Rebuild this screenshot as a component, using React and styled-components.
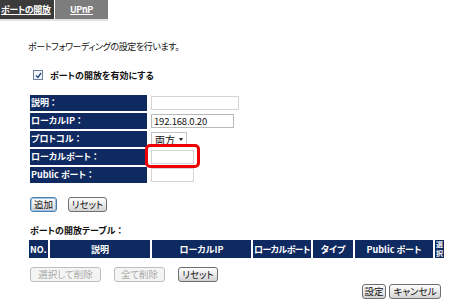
import React from 'react';
import styled, { createGlobalStyle } from 'styled-components';

const GlobalStyle = createGlobalStyle`
  body {
    margin: 0;
    background: #fff;
    font-family: "Noto Sans CJK JP", "Liberation Sans", sans-serif;
    font-feature-settings: "palt";
  }
`;

const Page = styled.div`
  width: 450px;
  height: 302px;
  overflow: hidden;
  position: relative;
  background: #fff;
  color: #111;
  font-size: 9px;
`;

const TabBar = styled.div`
  display: flex;
  gap: 1px;
  width: 108px;
  height: 19px;
  border-bottom: 2px solid #e2e2e2;
`;

const Tab = styled.div`
  width: ${(p) => p.$w}px;
  background: ${(p) => (p.$active ? '#3b3b3b' : '#7d7d7d')};
  color: #fff;
  font-weight: bold;
  font-size: 9px;
  letter-spacing: -0.4px;
  white-space: nowrap;
  text-decoration: underline;
  display: flex;
  align-items: center;
  justify-content: ${(p) => (p.$active ? 'flex-start' : 'center')};
  padding-left: ${(p) => (p.$active ? 1 : 0)}px;
  padding-bottom: 1px;
  box-sizing: border-box;
`;

const Content = styled.div`
  padding-left: 30px;
`;

const Intro = styled.div`
  margin-top: 20px;
  margin-left: -2px;
  height: 12px;
  line-height: 12px;
  letter-spacing: -0.4px;
`;

const CheckRow = styled.div`
  display: flex;
  align-items: center;
  gap: 7px;
  margin-top: 16px;
  margin-left: 3px;
  height: 12px;
  font-weight: bold;
`;

const CheckBox = styled.span`
  width: 8px;
  height: 8px;
  border: 1px solid #6b7f9c;
  background: #f4f6fa;
  display: flex;
  align-items: center;
  justify-content: center;
`;

const FormGrid = styled.div`
  display: grid;
  grid-template-columns: 117px auto;
  column-gap: 4px;
  row-gap: 2px;
  margin-top: 14px;
`;

const Label = styled.div`
  background: #0f2a60;
  color: #fff;
  font-weight: bold;
  height: 16px;
  line-height: 16px;
  padding-left: 1px;
  white-space: pre;
`;

const Field = styled.div`
  display: flex;
  align-items: center;
`;

const InputWrap = styled.div`
  position: relative;
  display: flex;
`;

const TextBox = styled.div`
  width: ${(p) => p.$w}px;
  height: 14px;
  box-sizing: border-box;
  border: 1px solid ${(p) => (p.$dark ? '#b9b9b9' : '#d4d4d4')};
  background: #fff;
  font-size: 9.5px;
  line-height: 12px;
  padding-left: 2px;
  letter-spacing: -0.2px;
`;

const Highlight = styled.div`
  position: absolute;
  left: -6px;
  top: -6px;
  width: 55px;
  height: 24px;
  box-sizing: border-box;
  border: 3px solid #ee0000;
  border-radius: 5px;
`;

const SelectBox = styled.div`
  width: 36px;
  height: 15px;
  box-sizing: border-box;
  border: 1px solid #c4c4c4;
  display: flex;
  align-items: center;
  justify-content: space-between;
  padding: 0 3px 0 3px;
  font-size: 10px;
`;

const Arrow = styled.span`
  width: 0;
  height: 0;
  border-left: 2.5px solid transparent;
  border-right: 2.5px solid transparent;
  border-top: 3px solid #222;
  margin-top: 1px;
`;

const ButtonRow = styled.div`
  display: flex;
  gap: ${(p) => p.$gap}px;
  margin-top: ${(p) => p.$top}px;
  justify-content: ${(p) => (p.$end ? 'flex-end' : 'flex-start')};
  padding-right: ${(p) => (p.$end ? 9 : 0)}px;
`;

const Button = styled.div`
  width: ${(p) => p.$w}px;
  height: 15px;
  box-sizing: border-box;
  border: 1px solid ${(p) => (p.$focus ? '#4a7fb0' : p.$disabled ? '#bdbdbd' : '#6e6e6e')};
  box-shadow: ${(p) => (p.$focus ? 'inset 0 0 0 1px #9cc4e6' : 'none')};
  border-radius: 3px;
  background: ${(p) =>
    p.$disabled ? '#f4f4f4' : 'linear-gradient(#fdfdfd, #e6e6e6 60%, #d2d2d2)'};
  color: ${(p) => (p.$disabled ? '#a9a9a9' : '#111')};
  display: flex;
  align-items: center;
  justify-content: center;
  font-size: 9.5px;
  line-height: 1;
  white-space: nowrap;
`;

const SectionTitle = styled.div`
  margin-top: 14px;
  font-weight: bold;
  height: 10px;
  line-height: 10px;
  white-space: pre;
`;

const HeaderRow = styled.div`
  display: grid;
  grid-template-columns: 19px 100px 99px 58px 40px 78px 9px;
  column-gap: 2px;
  margin-top: 4px;
  margin-left: -1px;
  height: 18px;
`;

const HeadCell = styled.div`
  background: #0f2a60;
  color: #fff;
  font-weight: bold;
  display: flex;
  align-items: center;
  justify-content: ${(p) => (p.$left ? 'flex-start' : 'center')};
  padding-left: ${(p) => (p.$left ? 1 : 0)}px;
  letter-spacing: ${(p) => (p.$tight ? '-0.6px' : '0')};
  white-space: nowrap;
  overflow: hidden;
`;

const NarrowCell = styled(HeadCell)`
  flex-direction: column;
  justify-content: center;
  font-size: 7px;
  line-height: 9px;
  letter-spacing: 0;
`;

function App() {
  return (
    <Page>
      <GlobalStyle />
      <TabBar>
        <Tab $active $w={54}>ポートの開放</Tab>
        <Tab $w={53}>UPnP</Tab>
      </TabBar>
      <Content>
        <Intro>ポートフォワーディングの設定を行います。</Intro>
        <CheckRow>
          <CheckBox>
            <svg width="7" height="7" viewBox="0 0 7 7">
              <path d="M1 3.5 L3 5.5 L6 1" fill="none" stroke="#2b4a7e" strokeWidth="1.4" />
            </svg>
          </CheckBox>
          ポートの開放を有効にする
        </CheckRow>

        <FormGrid>
          <Label>説明 ：</Label>
          <Field><TextBox $w={88} /></Field>
          <Label>ローカルIP ：</Label>
          <Field><TextBox $w={83} $dark>192.168.0.20</TextBox></Field>
          <Label>プロトコル ：</Label>
          <Field>
            <SelectBox>両方<Arrow /></SelectBox>
          </Field>
          <Label>ローカルポート ：</Label>
          <Field>
            <InputWrap>
              <TextBox $w={43} />
              <Highlight />
            </InputWrap>
          </Field>
          <Label>Public ポート ：</Label>
          <Field><TextBox $w={43} /></Field>
        </FormGrid>

        <ButtonRow $gap={11} $top={14}>
          <Button $w={27} $focus>追加</Button>
          <Button $w={39}>リセット</Button>
        </ButtonRow>

        <SectionTitle>ポートの開放テーブル ：</SectionTitle>
      </Content>

      <Content>
        <HeaderRow>
          <HeadCell $left>NO.</HeadCell>
          <HeadCell>説明</HeadCell>
          <HeadCell>ローカルIP</HeadCell>
          <HeadCell $left $tight>ローカルポート</HeadCell>
          <HeadCell>タイプ</HeadCell>
          <HeadCell>Public ポート</HeadCell>
          <NarrowCell>選<br />択</NarrowCell>
        </HeaderRow>

        <ButtonRow $gap={13} $top={9}>
          <Button $w={71} $disabled>選択して削除</Button>
          <Button $w={51} $disabled>全て削除</Button>
          <Button $w={40}>リセット</Button>
        </ButtonRow>
      </Content>

      <ButtonRow $gap={3} $top={2} $end>
        <Button $w={24}>設定</Button>
        <Button $w={52}>キャンセル</Button>
      </ButtonRow>
    </Page>
  );
}

export default App;
